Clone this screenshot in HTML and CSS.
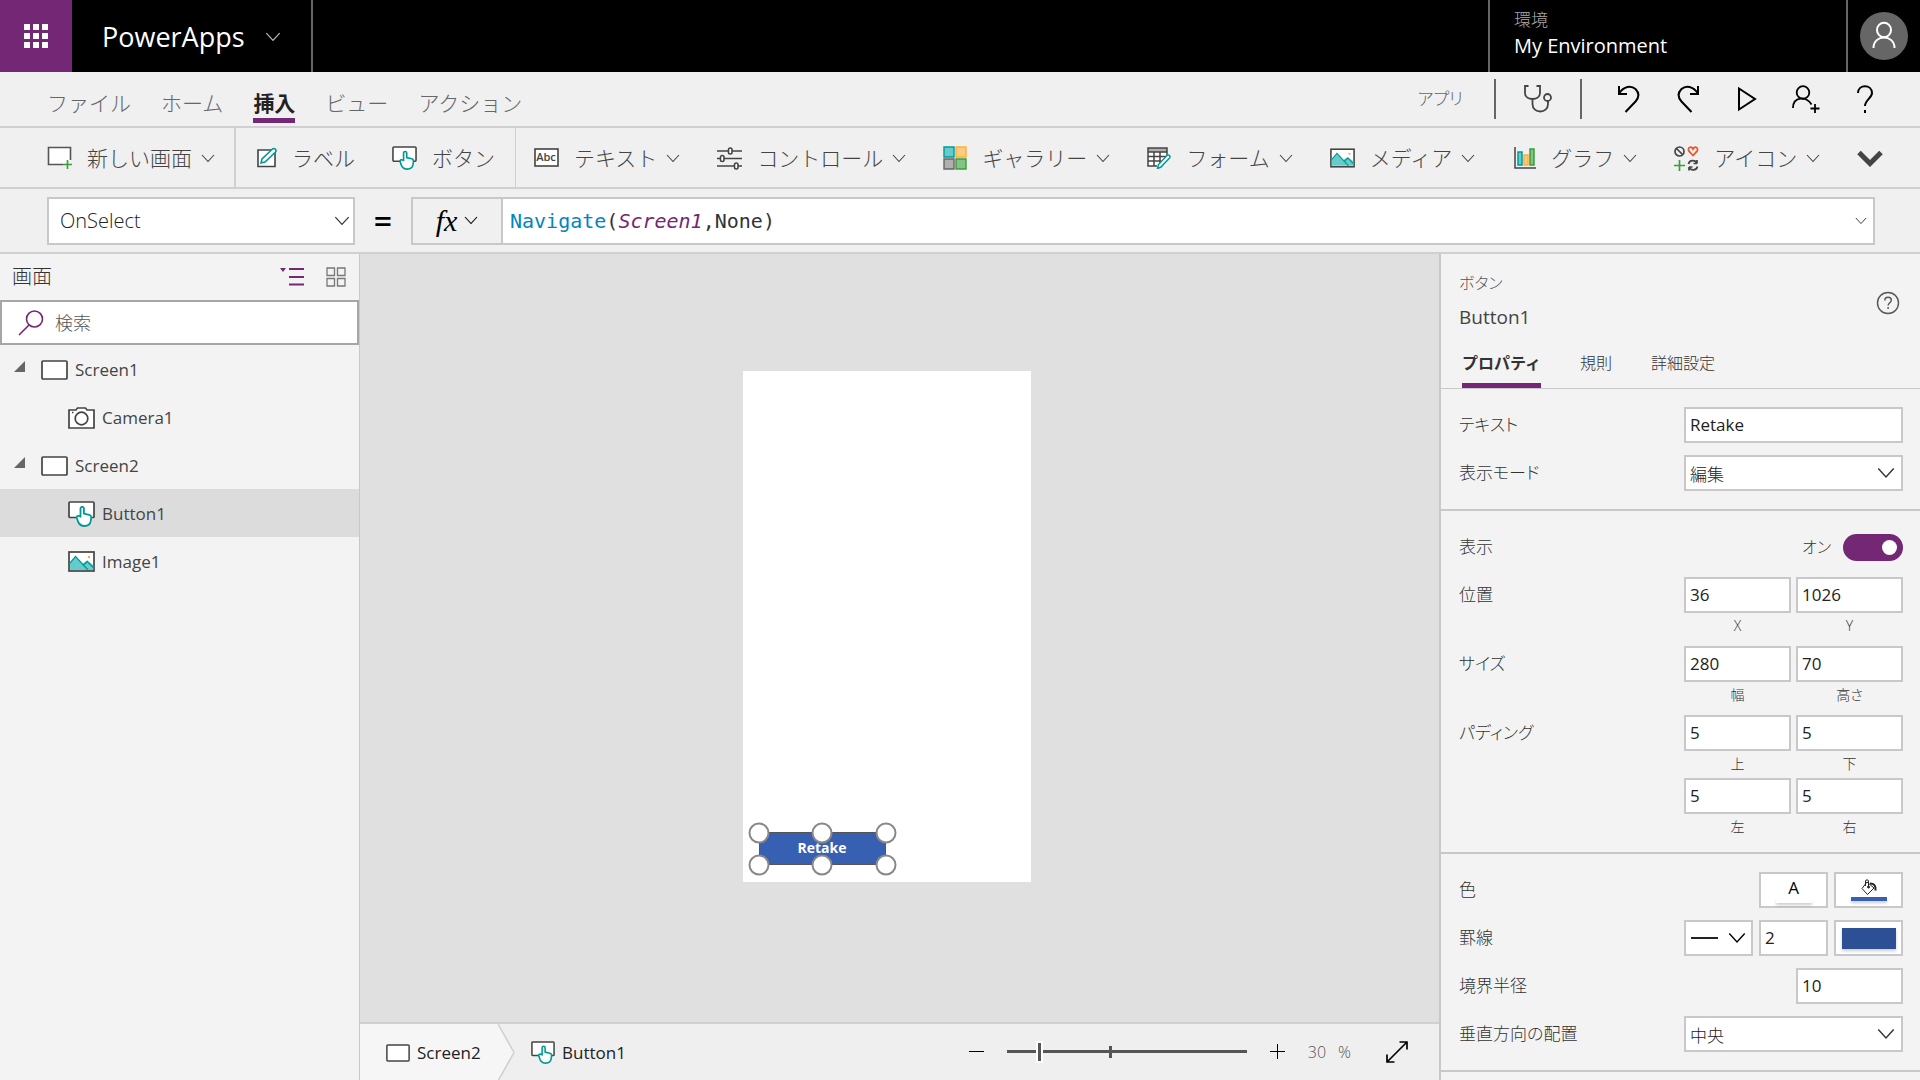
FILE: index.html
```html
<!DOCTYPE html>
<html lang="ja">
<head>
<meta charset="utf-8">
<meta name="viewport" content="width=device-width, initial-scale=1">
<title>PowerApps</title>
<link rel="stylesheet" href="styles.css">
</head>
<body>
<svg class="defs" aria-hidden="true">
  <symbol id="chev" viewBox="0 0 14 9"><path d="M1 1l6 6.5L13 1" fill="none" stroke="currentColor" stroke-width="1.1"/></symbol>
  <symbol id="screen" viewBox="0 0 27 20"><rect x="1" y="1" width="25" height="18" rx="1" fill="#fff" stroke="#444" stroke-width="1.7"/></symbol>
  <symbol id="btn" viewBox="0 0 27 26"><rect x="1" y="1" width="25" height="15.5" rx="1" fill="#fff" stroke="#444" stroke-width="1.7"/><path d="M12.5 15.5V7.6c0-2.2 3.4-2.2 3.4 0v5l5.3 1.2c1.6.4 2.2 1.2 2 2.8l-.5 3.6c-.5 3-2.8 4.8-6.2 4.8-3 0-5-1.200-6.300-4L8.800 17c-.7-1.800 1.500-3 3.700-1.300z" fill="#fff" stroke="#009a96" stroke-width="1.8" stroke-linejoin="round"/></symbol>
  <symbol id="image" viewBox="0 0 27 21"><rect x="1" y="1" width="25" height="19" fill="#fff" stroke="#444" stroke-width="1.7"/><path d="M2 12.500L7.500 6l6.500 7 5-3.500 6.200 4.500V19H2z" fill="#66cccb"/><path d="M2 12L7.500 5.500 20 19M15.500 14l3.800-3.500 6 6" fill="none" stroke="#009a96" stroke-width="1.3"/><circle cx="21" cy="6" r="1.2" fill="#fbb03b"/></symbol>
</svg>
<div class="app">
  <header class="top">
    <button class="waffle" aria-label="アプリ起動ツール"><svg width="26" height="26" viewBox="0 0 26 26" fill="#fff"><path d="M1 1h6v6H1zM10 1h6v6h-6zM19 1h6v6h-6zM1 10h6v6H1zM10 10h6v6h-6zM19 10h6v6h-6zM1 19h6v6H1zM10 19h6v6h-6zM19 19h6v6h-6z"/></svg></button>
    <button class="brand">PowerApps <svg width="16" height="10"><use href="#chev"/></svg></button>
    <div class="env"><span class="env-label">環境</span><span>My Environment</span></div>
    <button class="user" aria-label="アカウント"><svg width="48" height="48" viewBox="0 0 48 48"><circle cx="24" cy="24" r="24" fill="#666"/><g fill="none" stroke="#fff" stroke-width="2"><ellipse cx="24" cy="18" rx="7" ry="7.300"/><path d="M13.500 36c0-14 21-14 21 0"/></g></svg></button>
  </header>

  <nav class="tabs">
    <a href="#file">ファイル</a><a href="#home">ホーム</a><a href="#insert" class="on">挿入</a><a href="#view">ビュー</a><a href="#action">アクション</a>
    <div class="tools">
      <span class="tools-app">アプリ</span>
      <button class="checker" aria-label="アプリ チェッカー"><svg width="28" height="28" viewBox="0 0 28 28" fill="none" stroke="#444" stroke-width="1.800"><path d="M4.500 1H1v7c0 8 15 8 15 0V1h-3.500M8.500 14v5c0 10 15.500 10 15.500 0v-3"/><circle cx="23.500" cy="12.500" r="3.500"/></svg></button>
      <button aria-label="元に戻す"><svg width="24" height="28" viewBox="0 0 24 28" fill="none" stroke="#000" stroke-width="2"><path d="M2 1v8h8M2 8.500C7 1 14 0 18.500 4c4 4 3.500 8.500 0 12.500L8.500 27"/></svg></button>
      <button aria-label="やり直し"><svg width="24" height="28" viewBox="0 0 24 28" fill="none" stroke="#000" stroke-width="2"><path d="M22 1v8h-8M22 8.500C17 1 10 0 5.500 4c-4 4-3.500 8.500 0 12.500L15.500 27"/></svg></button>
      <button aria-label="プレビュー"><svg width="20" height="26" viewBox="0 0 20 26" fill="none" stroke="#000" stroke-width="2"><path d="M2 2.500v21L18 13z"/></svg></button>
      <button aria-label="共有"><svg width="28" height="28" viewBox="0 0 28 28" fill="none" stroke="#000" stroke-width="1.800"><circle cx="11" cy="7.500" r="6.300"/><path d="M1 23c0-12 14-12 18.500-3.500M23 19v9M18.500 23.500h9"/></svg></button>
      <button aria-label="ヘルプ"><svg width="18" height="28" viewBox="0 0 18 28" fill="none" stroke="#000" stroke-width="2"><path d="M2 8c0-9 14-9 14 0 0 5-7 7-7 13M9 25v3"/></svg></button>
    </div>
  </nav>

  <div class="ribbon">
    <div class="group g1">
      <button><svg width="25" height="24" viewBox="0 0 25 24"><path d="M16 18.500H1.500v-17h22V14" fill="#fff" stroke="#555" stroke-width="1.600"/><path d="M20.500 14v9M16 18.500h9" stroke="#3a9e3a" stroke-width="1.600"/></svg>新しい画面<svg class="ch"><use href="#chev"/></svg></button>
    </div>
    <div class="group g2">
      <button><svg width="20" height="22" viewBox="0 0 20 22"><path d="M1 3h17v16.500H1z" fill="#fff" stroke="#444" stroke-width="1.600"/><path d="M4 16l1-4L15.500 2c2-1.500 4.500 1 3 3L8 15z" fill="#fff" stroke="#009a96" stroke-width="1.600"/></svg>ラベル</button>
      <button><svg width="25" height="24"><use href="#btn"/></svg>ボタン</button>
    </div>
    <div class="group g3">
      <button><svg width="25" height="20" viewBox="0 0 25 20"><rect x="1" y="1" width="23" height="17" fill="#fff" stroke="#444" stroke-width="1.600"/><text x="12" y="13" class="abc">Abc</text></svg>テキスト<svg class="ch"><use href="#chev"/></svg></button>
      <button><svg width="25" height="23" viewBox="0 0 25 23" fill="#fff" stroke="#444" stroke-width="1.600"><path d="M0 4h25M0 11.500h25M0 19h25"/><rect x="11.500" y="1" width="3.500" height="6" rx="1.700"/><rect x="3.500" y="8.500" width="3.500" height="6" rx="1.700"/><rect x="17.500" y="16" width="3.500" height="6" rx="1.700"/></svg>コントロール<svg class="ch"><use href="#chev"/></svg></button>
      <button><svg width="24" height="24" viewBox="0 0 24 24" stroke-width="1.400"><path d="M1 1h10v10H1z" fill="#66cccb" stroke="#009a96"/><path d="M13 1h10v10H13z" fill="#fdcb81" stroke="#fbb03b"/><path d="M1 13h10v10H1z" fill="#b0b0b0" stroke="#666"/><path d="M13 13h10v10H13z" fill="#85c285" stroke="#3a9e3a"/></svg>ギャラリー<svg class="ch"><use href="#chev"/></svg></button>
      <button><svg width="24" height="22" viewBox="0 0 24 22" fill="none"><path d="M1 1h19v18H1z" fill="#fff"/><path d="M1 1h19v4H1z" fill="#b0b0b0"/><path d="M10 19H1V1h19v7M1 5h19M1 9.500h18M1 14h13M7 5v14M13 5v11" stroke="#444" stroke-width="1.500"/><path d="M10.500 21.500l1-4L20 8.500c1.500-1.300 4 .5 2.500 2.500L14 20z" fill="#fff" stroke="#009a96" stroke-width="1.500"/></svg>フォーム<svg class="ch"><use href="#chev"/></svg></button>
      <button><svg width="25" height="20"><use href="#image"/></svg>メディア<svg class="ch"><use href="#chev"/></svg></button>
      <button><svg width="24" height="22" viewBox="-2 0 24 22" fill="none" stroke-width="1.500"><path d="M1 0v21h21" stroke="#444"/><path d="M4 5h4v13H4z" fill="#66cccb" stroke="#009a96"/><path d="M10 8h4v10h-4z" fill="#fdcb81" stroke="#fbb03b"/><path d="M16 2h4v16h-4z" fill="#85c285" stroke="#3a9e3a"/></svg>グラフ<svg class="ch"><use href="#chev"/></svg></button>
      <button><svg width="25" height="25" viewBox="0 0 25 25" fill="none" stroke-width="1.700"><circle cx="5.500" cy="5.500" r="4.500" stroke="#444"/><path d="M2.500 2.500l6 6" stroke="#444"/><path d="M19 9.500l-4-4.300c-2.200-3.500 2.500-5.700 4-2.200 1.500-3.500 6.200-1.300 4 2.200z" stroke="#f0502a"/><path d="M5.500 14v11M0 19.500h11" stroke="#3a9e3a"/><path d="M14.500 18c1-4.500 7-4.500 8.500-.5v-3.500M23 17.500h-3.500M23.500 20.500c-1 4.500-7 4.500-8.500.5v3.500M15 21h3.500" stroke="#444"/></svg>アイコン<svg class="ch"><use href="#chev"/></svg></button>
      <button class="more" aria-label="その他"><svg width="26" height="17" viewBox="0 0 26 17" fill="none" stroke="#444" stroke-width="5"><path d="M2 2.500l11 11 11-11"/></svg></button>
    </div>
  </div>

  <div class="formula">
    <div class="pick prop"><select aria-label="プロパティ"><option>OnSelect</option></select><svg width="16" height="10"><use href="#chev"/></svg></div>
    <span class="eq">=</span>
    <button class="fx"><i>fx</i><svg width="14" height="9"><use href="#chev"/></svg></button>
    <div class="code"><div contenteditable="true" role="textbox" aria-label="数式" spellcheck="false"><span class="fn">Navigate</span>(<span class="ref">Screen1</span>,None)</div><svg width="12" height="8"><use href="#chev"/></svg></div>
  </div>

  <div class="body">
    <aside class="tree">
      <div class="tree-head"><h2>画面</h2>
        <button aria-label="ツリー ビュー"><svg width="24" height="20" viewBox="0 0 24 20"><path d="M0 1h6L3 5z" fill="#742774"/><path d="M9 2h15M9 10h15M9 17.500h15" stroke="#742774" stroke-width="2"/></svg></button>
        <button aria-label="サムネイル"><svg width="20" height="20" viewBox="0 0 20 20" fill="none" stroke="#777" stroke-width="1.300"><path d="M1 1h7.500v7.500H1zM11.500 1H19v7.500h-7.500zM1 11.500h7.500V19H1zM11.500 11.500H19V19h-7.500z"/></svg></button>
      </div>
      <label class="search"><svg width="26" height="26" viewBox="0 0 26 26" fill="none" stroke="#742774" stroke-width="1.600"><circle cx="16.500" cy="9" r="8"/><path d="M11 15L1 25"/></svg><input type="search" placeholder="検索" aria-label="検索"></label>
      <ul>
        <li><svg class="tri" width="11" height="11"><path d="M11 0v11H0z"/></svg><svg width="27" height="20"><use href="#screen"/></svg>Screen1</li>
        <li class="child"><svg width="27" height="22" viewBox="0 0 27 22" fill="none" stroke="#444" stroke-width="1.700"><path d="M1 3h7l1.500-2h8L19 3h7v18H1z" fill="#fff"/><circle cx="13.500" cy="11.500" r="6.300"/><path d="M4 5.500h1.500"/></svg>Camera1</li>
        <li><svg class="tri" width="11" height="11"><path d="M11 0v11H0z"/></svg><svg width="27" height="20"><use href="#screen"/></svg>Screen2</li>
        <li class="child on"><svg width="27" height="26"><use href="#btn"/></svg>Button1</li>
        <li class="child"><svg width="27" height="21"><use href="#image"/></svg>Image1</li>
      </ul>
    </aside>

    <main class="stage">
      <div class="canvas">
        <div class="phone">
          <div class="sel"><button>Retake</button><i class="h tl"></i><i class="h tc"></i><i class="h tr"></i><i class="h bl"></i><i class="h bc"></i><i class="h br"></i></div>
        </div>
      </div>
      <footer class="status">
        <a href="#screen2" class="crumb first"><svg width="24" height="18"><use href="#screen"/></svg>Screen2</a>
        <svg class="sep" width="17" height="57" viewBox="0 0 17 57"><path d="M0 0l16 28.500L0 57z" fill="#f6f6f6"/><path d="M0 0l16 28.500L0 57" fill="none" stroke="#d0d0d0" stroke-width="1.500"/></svg>
        <a href="#button1" class="crumb"><svg width="24" height="23"><use href="#btn"/></svg>Button1</a>
        <div class="zoom">
          <button aria-label="縮小"><svg width="15" height="15"><path d="M0 7.500h15" stroke="#000"/></svg></button>
          <input type="range" min="10" max="168" value="30" aria-label="ズーム">
          <button aria-label="拡大"><svg width="15" height="15"><path d="M0 7.500h15M7.500 0v15" stroke="#000"/></svg></button>
          <span class="pct"><span>30</span><span>%</span></span>
          <button aria-label="ウィンドウに合わせる"><svg width="22" height="22" viewBox="0 0 22 22" fill="none" stroke="#000" stroke-width="1.700"><path d="M1.500 20.500l19-19M13.500 1H21v7.500M1 13.500V21h7.500"/></svg></button>
        </div>
      </footer>
    </main>

    <aside class="props">
      <div class="props-head">
        <div><p class="kind">ボタン</p><p class="name">Button1</p></div>
        <button aria-label="ヘルプ"><svg width="24" height="24" viewBox="0 0 24 24" fill="none" stroke="#555" stroke-width="1.400"><circle cx="12" cy="12" r="10.500"/><path d="M8.800 9.500c0-4.500 6.500-4.200 6.500-.3 0 2.300-3.200 2.800-3.200 5.300M12.100 16v2"/></svg></button>
      </div>
      <nav class="ptabs"><a href="#props" class="on">プロパティ</a><a href="#rules">規則</a><a href="#adv">詳細設定</a></nav>
      <section>
        <div class="row"><label for="t">テキスト</label><input class="full" id="t" value="Retake"></div>
        <div class="row"><label for="m">表示モード</label><div class="pick full"><select id="m"><option>編集</option></select><svg width="18" height="12"><use href="#chev"/></svg></div></div>
      </section>
      <section>
        <div class="row"><label for="v">表示</label><span class="onoff">オン</span><input type="checkbox" role="switch" class="toggle" id="v" checked></div>
        <div class="row two"><span>位置</span><div><input id="px" value="36"><label for="px">X</label></div><div><input id="py" value="1026"><label for="py">Y</label></div></div>
        <div class="row two"><span>サイズ</span><div><input id="sw" value="280"><label for="sw">幅</label></div><div><input id="sh" value="70"><label for="sh">高さ</label></div></div>
        <div class="row two tight"><span>パディング</span><div><input id="pt" value="5"><label for="pt">上</label></div><div><input id="pb" value="5"><label for="pb">下</label></div></div>
        <div class="row two"><span></span><div><input id="pl" value="5"><label for="pl">左</label></div><div><input id="pr" value="5"><label for="pr">右</label></div></div>
      </section>
      <section>
        <div class="row"><span>色</span><button class="sw" aria-label="文字の色"><b>A</b><i class="bar white"></i></button><button class="sw" aria-label="塗りつぶし"><svg width="18" height="18" viewBox="0 0 18 18" fill="none" stroke="#222"><path d="M7 3l7 6-6.500 6.500L2 9.500zM5.500 7V2c0-1.500 3-1.500 3 0v5"/><circle cx="8.500" cy="8" r="1" fill="#222"/><path d="M10 4.500c4 0 6 2 5.500 7" stroke-width="2"/></svg><i class="bar"></i></button></div>
        <div class="row"><span>罫線</span><button class="sw line" aria-label="線の種類"><svg width="27" height="2"><path d="M0 1h27" stroke="#222" stroke-width="2"/></svg><svg width="18" height="12"><use href="#chev"/></svg></button><input class="third" aria-label="線の太さ" value="2"><button class="sw" aria-label="線の色"><i class="fill"></i></button></div>
        <div class="row"><label for="r">境界半径</label><input class="half" id="r" value="10"></div>
        <div class="row"><label for="va">垂直方向の配置</label><div class="pick full"><select id="va"><option>中央</option></select><svg width="18" height="12"><use href="#chev"/></svg></div></div>
      </section>
    </aside>
  </div>
</div>
</body>
</html>
```
FILE: styles.css
```css
* { box-sizing: border-box; }
body, p, h2, ul { margin: 0; padding: 0; }
body {
  font: 300 18px/24px "Open Sans", "Noto Sans CJK JP", sans-serif;
  color: #333;
  background: #f3f3f3;
}
button, input, select { font: inherit; color: inherit; }
button { background: none; border: 0; padding: 0; display: flex; align-items: center; }
a { color: inherit; text-decoration: none; }
svg { display: block; flex: none; }
.defs { position: absolute; width: 0; height: 0; }
.app { display: flex; flex-direction: column; height: 100vh; overflow: hidden; }

.top { display: flex; height: 72px; flex: none; background: #000; color: #fff; }
.waffle { width: 72px; justify-content: center; background: #742774; }
.brand { gap: 20px; padding: 2px 30px 0 30px; font-size: 27px; line-height: 36px; font-weight: 400; border-right: 2px solid #666; }
.brand svg { color: #bbb; }
.env { margin-left: auto; width: 360px; padding: 8px 24px; border: solid #666; border-width: 0 2px; display: flex; flex-direction: column; gap: 2px; font-size: 20px; font-weight: 400; }
.env-label { font-size: 17px; font-weight: 300; color: #aaa; }
.user { width: 72px; justify-content: center; }

.tabs { display: flex; height: 56px; flex: none; align-items: flex-end; gap: 30px; padding: 0 43px 3px 47px; background: #f0f0f0; border-bottom: 2px solid #d0d0d0; font-size: 21px; color: #666; }
.tabs > a { line-height: 30px; padding-bottom: 5px; }
.tabs > .on { font-weight: 700; color: #222; padding-bottom: 0; border-bottom: 5px solid #742774; }
.tools { margin-left: auto; align-self: center; display: flex; align-items: center; height: 40px; gap: 35px; padding-top: 2px; }
.tools-app { font-size: 17px; font-feature-settings: "palt"; }
.tools button { width: 24px; justify-content: center; }
.tools .checker { width: 88px; height: 40px; border: solid #666; border-width: 0 2px; margin-left: -4px; }

.ribbon { display: flex; height: 61px; flex: none; background: #f0f0f0; border-bottom: 2px solid #d0d0d0; font-size: 21px; color: #444; }
.group { display: flex; align-items: stretch; gap: 37px; padding-left: 18px; }
.group button { gap: 15px; padding-top: 1px; }
.g1 { width: 236px; padding-left: 47px; border-right: 2px solid #d0d0d0; }
.g2 { width: 280px; gap: 37px; padding-left: 21px; border-right: 1px solid #d0d0d0; }
.g3 { flex: 1; }
.ch { width: 14px; height: 9px; margin-left: -6px; }
.abc { font: 600 11px "Open Sans", sans-serif; text-anchor: middle; fill: #444; }

.formula { display: flex; height: 65px; flex: none; align-items: center; padding: 0 45px 0 47px; background: #f0f0f0; border-bottom: 2px solid #d0d0d0; }
.pick { display: grid; align-items: center; }
.pick select { grid-area: 1 / 1; appearance: none; width: 100%; height: 36px; padding: 0 4px; background: #fff; border: 2px solid #c8c8c8; border-radius: 0; color: #222; }
.pick svg { grid-area: 1 / 1; justify-self: end; margin-right: 8px; pointer-events: none; }
.prop { width: 308px; font-size: 20px; }
.prop select { height: 48px; padding-left: 11px; }
.prop svg { margin-right: 5px; }
.eq { width: 56px; text-align: center; font: 600 32px "Open Sans", sans-serif; color: #000; }
.fx { width: 90px; height: 48px; justify-content: center; gap: 7px; border: 2px solid #c8c8c8; border-right: 0; font: 30px "Liberation Serif", serif; color: #000; }
.code { flex: 1; height: 48px; display: flex; align-items: center; justify-content: space-between; padding: 0 6px 0 7px; background: #fff; border: 2px solid #c8c8c8; font: 20px "DejaVu Sans Mono", monospace; color: #333; }
.code div { flex: 1; }
.fn { color: #0086bf; }
.ref { color: #742774; font-style: italic; }

.body { flex: 1; min-height: 0; display: flex; }
.tree { width: 360px; flex: none; border-right: 1px solid #c8c8c8; background: #f3f3f3; }
.tree-head { height: 46px; display: flex; align-items: center; gap: 22px; padding: 0 13px 0 12px; }
.tree-head h2 { margin-right: auto; font-size: 20px; font-weight: 300; }
.search { display: flex; align-items: center; height: 45px; gap: 11px; padding-left: 16px; background: #fff; border: 2px solid #a6a6a6; }
.search input { flex: 1; border: 0; padding: 0; background: none; outline: 0; }
.search input::placeholder { color: #555; }
.tree ul { list-style: none; }
.tree li { height: 48px; display: flex; align-items: center; gap: 7px; padding: 1px 0 0 14px; font-size: 17px; font-weight: 400; color: #444; }
.tri { fill: #666; margin: 0 9px 6px 0; }
.tree .child { padding-left: 68px; }
.tree .on { background: #dcdcdc; }

.stage { flex: 1; min-width: 0; display: flex; flex-direction: column; background: #e0e0e0; }
.canvas { flex: 1; display: flex; align-items: center; justify-content: center; padding: 0 26px 24px 0; }
.phone { position: relative; width: 288px; height: 511px; background: #fff; }
.sel { position: absolute; left: 16px; bottom: 17px; width: 127px; height: 33px; }
.sel button { width: 100%; height: 100%; justify-content: center; background: #3860b2; border: 1px solid #555; color: #fff; font-size: 14px; font-weight: 700; }
.h { position: absolute; width: 21px; height: 21px; border: 2px solid #888; border-radius: 50%; background: #fff; transform: translate(-50%, -50%); }
.tl { left: 0; top: 1px; } .tc { left: 50%; top: 1px; } .tr { left: 100%; top: 1px; }
.bl { left: 0; top: 100%; } .bc { left: 50%; top: 100%; } .br { left: 100%; top: 100%; }

.status { height: 58px; flex: none; display: flex; align-items: stretch; border-top: 2px solid #d0d0d0; background: #efefef; font-size: 17px; }
.crumb { display: flex; align-items: center; gap: 7px; color: #222; padding-top: 1px; font-weight: 400; }
.crumb.first { width: 138px; padding-left: 26px; background: #f6f6f6; }
.sep { margin-right: 16px; }
.zoom { margin-left: auto; display: flex; align-items: center; gap: 23px; padding: 0 31px 1px 0; }
.zoom input {
  appearance: none; width: 240px; height: 22px; margin: 0;
  background: linear-gradient(#555, #555) 43% 50% / 3px 12px no-repeat, linear-gradient(#555, #555) 0 50% / 100% 3px no-repeat;
}
.zoom input::-webkit-slider-thumb { appearance: none; width: 7px; height: 22px; background: #555; border: 2px solid #fff; }
.pct { display: flex; gap: 12px; padding-right: 12px; font-size: 16px; color: #555; }

.props { width: 481px; flex: none; border-left: 2px solid #c8c8c8; background: #f3f3f3; }
.props-head { display: flex; justify-content: space-between; align-items: center; padding: 17px 20px 11px 18px; font-feature-settings: "palt"; }
.props-head > div { display: grid; gap: 8px; }
.props-head button { padding-top: 4px; }
.kind { font-size: 16px; color: #555; }
.name { font-size: 19px; line-height: 28px; font-weight: 400; color: #444; }
.ptabs { display: flex; gap: 39px; padding-left: 21px; height: 47px; border-bottom: 1px solid #c8c8c8; font-size: 16px; line-height: 42px; }
.ptabs .on { font-weight: 700; border-bottom: 5px solid #742774; }
.props section { display: grid; gap: 12px; padding: 18px 17px 18px 18px; border-bottom: 2px solid #c8c8c8; }
.row { display: flex; gap: 6px; min-height: 36px; line-height: 36px; font-size: 17px; font-feature-settings: "palt"; }
.row > :first-child { margin-right: auto; }
.row input:not(.toggle) { width: 107px; height: 36px; padding: 0 4px; background: #fff; border: 2px solid #c8c8c8; border-radius: 0; display: block; color: #222; font-weight: 400; }
.row input.full, .row .full { width: 219px; }
.row input:not(.toggle).full { width: 219px; }
.row input:not(.toggle).third { width: 69px; }
.two div label { display: block; text-align: center; font-size: 14px; line-height: 26px; padding-bottom: 7px; }
.two { gap: 5px; margin-bottom: -12px; }
.two.tight { margin-bottom: -18px; }
.two:last-child { margin-bottom: -1px; height: 57px; }
.onoff { margin-right: 6px; font-size: 16px; }
.toggle { appearance: none; align-self: center; width: 60px; height: 27px; margin: 0; padding: 6px; border-radius: 14px; background: #742774; display: flex; justify-content: flex-end; }
.toggle::before { content: ""; width: 15px; height: 15px; border-radius: 50%; background: #fff; }
.sw { width: 69px; height: 36px; background: #fff; border: 2px solid #c8c8c8; flex-direction: column; justify-content: center; color: #000; }
.sw b { font-weight: 400; line-height: 22px; }
.bar { width: 36px; height: 4px; background: #3860b2; box-shadow: 0 2px 3px #0003; }
.bar.white { background: #fff; }
.fill { width: 54px; height: 21px; background: #2d4f96; box-shadow: 0 2px 3px #0003; }
.line { flex-direction: row; gap: 10px; }
```
